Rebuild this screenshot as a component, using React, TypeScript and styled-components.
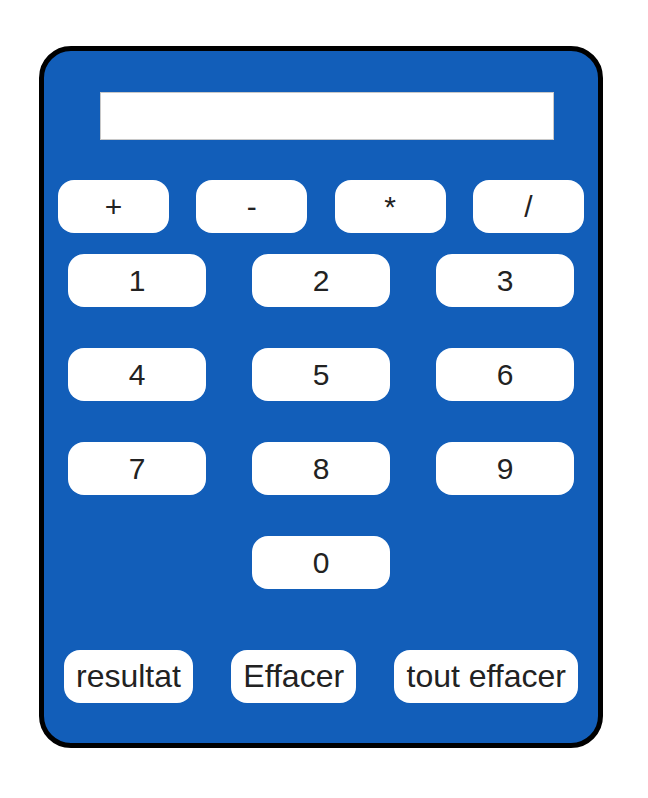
import React, { useState } from 'react'
import styled, { createGlobalStyle } from 'styled-components'

const GlobalStyle = createGlobalStyle`
  body {
    margin: 0;
    background: #fff;
    font-family: 'Liberation Sans', Arial, sans-serif;
  }
`

const Calculator = styled.div`
  box-sizing: border-box;
  width: 564px;
  height: 702px;
  margin: 46px 0 0 39px;
  padding-top: 41px;
  background: #125eb9;
  border: 5px solid #000;
  border-radius: 32px;
  display: flex;
  flex-direction: column;
`

const Screen = styled.div`
  box-sizing: border-box;
  width: 454px;
  height: 48px;
  margin-left: 56px;
  background: #fff;
  border: 1px solid #c8c8c8;
  font-size: 28px;
  line-height: 46px;
  text-align: right;
  padding: 0 10px;
  color: #222;
`

const Operators = styled.div`
  display: flex;
  justify-content: space-between;
  padding: 0 14px 0 14px;
  margin-top: 40px;
`

const Digits = styled.div`
  display: grid;
  grid-template-columns: repeat(3, 138px);
  column-gap: 46px;
  row-gap: 41px;
  justify-content: center;
  margin-top: 21px;
`

const Actions = styled.div`
  display: flex;
  justify-content: space-between;
  padding: 0 20px 0 20px;
  margin-top: 61px;
`

const Key = styled.button<{ $width?: number; $col?: number; $size?: number }>`
  box-sizing: border-box;
  height: 53px;
  width: ${({ $width }) => ($width ? `${$width}px` : 'auto')};
  padding: 0 12px;
  border: none;
  border-radius: 16px;
  background: #fff;
  color: #222;
  font-family: 'Liberation Sans', Arial, sans-serif;
  font-size: ${({ $size = 30 }) => $size}px;
  line-height: 53px;
  text-align: center;
  white-space: nowrap;
  cursor: pointer;
  ${({ $col }) => $col && `grid-column: ${$col};`}
`

const operators = ['+', '-', '*', '/']
const digits = ['1', '2', '3', '4', '5', '6', '7', '8', '9']

function App() {
  const [value, setValue] = useState('')

  function press(key: string) {
    setValue(value + key)
  }

  function compute() {
    try {
      // eslint-disable-next-line no-new-func
      setValue(String(Function(`return (${value})`)()))
    } catch {
      setValue('')
    }
  }

  return (
    <>
      <GlobalStyle />
      <Calculator>
        <Screen>{value}</Screen>
        <Operators>
          {operators.map((op) => (
            <Key key={op} $width={111} onClick={() => press(op)}>
              {op}
            </Key>
          ))}
        </Operators>
        <Digits>
          {digits.map((d) => (
            <Key key={d} onClick={() => press(d)}>
              {d}
            </Key>
          ))}
          <Key $col={2} onClick={() => press('0')}>
            0
          </Key>
        </Digits>
        <Actions>
          <Key $size={32} onClick={compute}>
            resultat
          </Key>
          <Key $size={32} onClick={() => setValue(value.slice(0, -1))}>
            Effacer
          </Key>
          <Key $size={32} onClick={() => setValue('')}>
            tout effacer
          </Key>
        </Actions>
      </Calculator>
    </>
  )
}

export default App
